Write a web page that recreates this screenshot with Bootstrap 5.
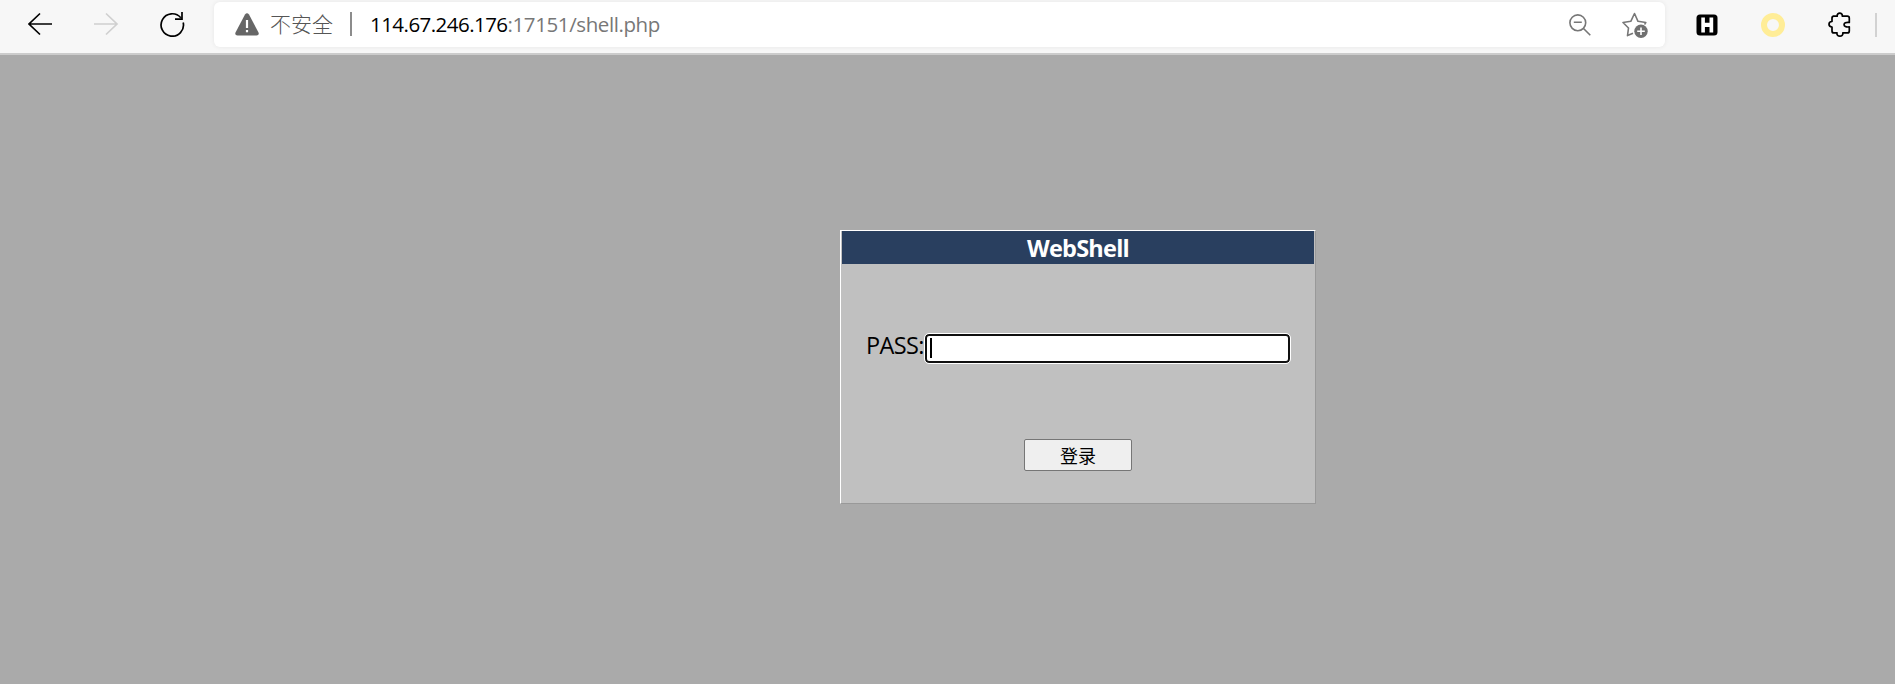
<!DOCTYPE html>
<html lang="zh-CN">
<head>
<meta charset="utf-8">
<meta name="viewport" content="width=device-width, initial-scale=1">
<title>WebShell</title>
<link href="https://cdn.jsdelivr.net/npm/bootstrap@5.3.0/dist/css/bootstrap.min.css" rel="stylesheet">
<style>
body { font-family: "Open Sans", "Noto Sans CJK SC", sans-serif; background: #aaa; color: #000; height: 684px; overflow: hidden; }
svg { display: block; flex: none; }
.toolbar { height: 55px; background: #f7f7f7; border-bottom: 2px solid #ccc; padding: 2px 18px 0 28px; }
.nav-icons { width: 186px; height: 44px; }
.nav-icons button, .tools button, .address button { border: 0; padding: 0; background: none; }
.address { width: 1451px; height: 45px; border-radius: 6px; background: #fff; padding: 0 17px 0 21px; box-shadow: 0 0 5px rgba(0,0,0,.07); }
.address > svg, .divide { margin-top: -1px; }
.warn { font-family: "Noto Sans CJK SC", sans-serif; font-weight: 300; font-size: 21px; line-height: 28px; color: #555; margin: -3px 0 0 11px; width: 80px; white-space: nowrap; }
.divide { width: 2px; height: 24px; background: #8c8c8c; margin-right: 18px; }
.url { font-size: 20.5px; line-height: 28px; letter-spacing: -.4px; margin-top: -2px; white-space: nowrap; color: #777; }
.url b { font-weight: 400; color: #000; letter-spacing: -.54px; }
.tools { margin-left: 31px; height: 45px; }
.endline { width: 2px; height: 24px; background: #d2d2d2; }
.login { width: 476px; height: 274px; margin: 175px 0 0 840px; background: #c0c0c0; border: 1px solid; border-color: #fff #999 #999 #fff; }
.login-title { height: 33px; line-height: 35px; margin: 0 1px; background: #293f5f; color: #fff; font-size: 23.5px; font-weight: 700; letter-spacing: -.75px; }
.pass-row { height: 31px; margin: 69px 0 0 25px; }
.pass-label { width: 59px; font-size: 23.5px; line-height: 25px; letter-spacing: -.6px; white-space: nowrap; }
.pass-input { width: 365px; height: 29px; background: #fff; border: 2px solid #101010; border-radius: 4px; outline: 1px solid #fff; margin-top: 1px; padding: 2px 3px; }
.caret { width: 2px; height: 20px; background: #000; }
.login-btn { width: 108px; height: 32px; margin-top: 75px; padding: 0; border: 1px solid #767676; border-radius: 2px; background: #efefef; color: #000; font: 400 18px/29px "Noto Sans CJK SC", sans-serif; }
</style>
</head>
<body>
<header class="toolbar d-flex align-items-start">
  <div class="nav-icons d-flex align-items-center flex-shrink-0">
    <button type="button" aria-label="后退"><svg width="25" height="24" viewBox="0 0 25 24" fill="none" stroke="#000" stroke-width="1.7"><path d="M24 12H1M12 1.5 1 12l11 10.5"/></svg></button>
    <button type="button" aria-label="前进" style="margin-left:41px"><svg width="25" height="24" viewBox="0 0 25 24" fill="none" stroke="#d0d0d0" stroke-width="1.7"><path d="M0 12h23M12 1.5 23 12 12 22.5"/></svg></button>
    <button type="button" aria-label="刷新" style="margin-left:41px"><svg width="25" height="26" viewBox="0 0 25 26" fill="none" stroke="#000" stroke-width="1.7"><path d="M23.2 11.5A11.2 11.2 0 1 1 20.8 6.7M22 1v7.2H15"/></svg></button>
  </div>
  <div class="address d-flex align-items-center flex-shrink-0">
    <svg width="24" height="23" viewBox="0 0 24 23"><path d="M10 1.5q2-2.5 4 0l9.5 18q1 3-2 3h-19q-3 0-2-3z" fill="#666"/><path d="M12 7v8M12 17v2.3" stroke="#fff" stroke-width="2.2"/></svg>
    <span class="warn">不安全</span>
    <span class="divide"></span>
    <span class="url"><b>114.67.246.176</b>:17151/shell.php</span>
    <button type="button" aria-label="缩小" class="ms-auto"><svg width="22" height="22" viewBox="0 0 22 22" fill="none" stroke="#777" stroke-width="1.6"><circle cx="8.8" cy="8.8" r="7.9"/><path d="M4.8 8.2h8M14.5 14.5l6.8 6.8"/></svg></button>
    <button type="button" aria-label="收藏" style="margin-left:31px"><svg width="26" height="26" viewBox="0 0 26 26" fill="none" stroke="#777" stroke-width="1.6" stroke-linejoin="round"><path d="M11 21.3 5.5 23.6l1-7.6L1 10.5l7.8-1.2L12.5 1.5 16 9.3l7.8 1.2-1.3 2"/><circle cx="19" cy="19.3" r="6.7" fill="#707070" stroke="none"/><path d="M19 15.5v7.6M15.2 19.3h7.6" stroke="#fff"/></svg></button>
  </div>
  <div class="tools d-flex align-items-center flex-shrink-0">
    <button type="button" aria-label="HackBar"><svg width="22" height="22" viewBox="0 0 22 22"><rect x=".5" y=".5" width="21" height="21" rx="3.5"/><path d="M5.3 3.5h3.6v5.2h4.6V3.5h3.7v15h-3.7v-5.5H8.9v5.5H5.3z" fill="#fff"/></svg></button>
    <button type="button" aria-label="扩展" style="margin-left:43px"><svg width="24" height="24" viewBox="0 0 24 24"><circle cx="12" cy="12" r="9" fill="none" stroke="#ffed97" stroke-width="6"/></svg></button>
    <button type="button" aria-label="扩展程序" style="margin-left:43px"><svg width="23" height="25" viewBox="0 0 23 25" fill="none" stroke="#000" stroke-width="1.7" stroke-linejoin="round"><path d="M4.5 4.2h4.7c-.5-4.2 5.6-4.2 5.1 0h5q2 0 2 2v4.2c-7-1-7 5.5 0 4.5v4q0 2-2 2h-4.5c1 4.2-6.8 4.2-5.8 0H6q-2 0-2-2V15c-4-.2-4-5.3 0-5.5V6.2q0-2 2-2"/></svg></button>
    <span class="endline mt-0" style="margin-left:24px"></span>
  </div>
</header>
<main>
  <form class="login">
    <div class="login-title text-center">WebShell</div>
    <div class="pass-row d-flex align-items-start">
      <span class="pass-label">PASS:</span>
      <div class="pass-input"><div class="caret"></div></div>
    </div>
    <div class="text-center"><button type="button" class="login-btn">登录</button></div>
  </form>
</main>
<script src="https://cdn.jsdelivr.net/npm/bootstrap@5.3.0/dist/js/bootstrap.bundle.min.js"></script>
</body>
</html>
